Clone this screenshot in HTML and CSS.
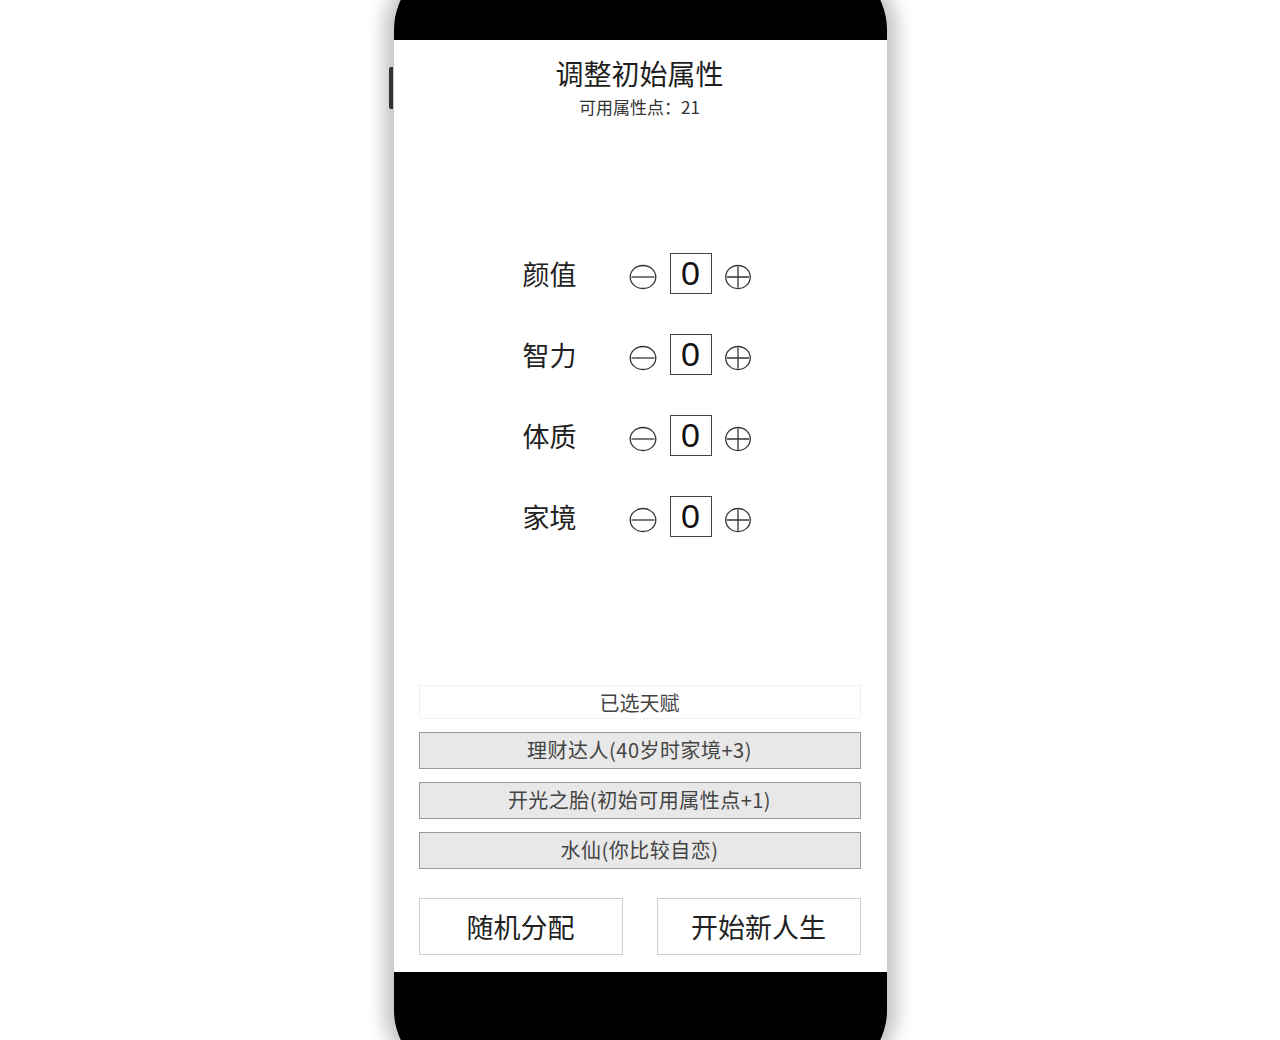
FILE: index.html
```html
<!DOCTYPE html>
<html lang="zh-CN">
<head>
  <meta charset="UTF-8">
  <meta name="viewport" content="width=device-width, initial-scale=1.0">
  <title>调整初始属性</title>
  <link rel="stylesheet" href="styles.css">
</head>
<body>
  <!-- Phone frame -->
  <div class="phone">
    <span class="side-key"></span>
    <div class="bezel-top"></div>

    <div class="screen">
      <!-- Header -->
      <div class="header">
        <div class="title">调整初始属性</div>
        <div class="points">可用属性点：21</div>
      </div>

      <!-- Attribute rows -->
      <div class="stats">
        <div class="stat">
          <span class="stat-name">颜值</span>
          <button class="step"><svg viewBox="0 0 28 26"><ellipse cx="14" cy="13" rx="12.8" ry="11.5"/><path d="M2.5 13h23"/></svg></button>
          <span class="stat-value">0</span>
          <button class="step plus"><svg viewBox="0 0 28 26"><ellipse cx="14" cy="13" rx="12.3" ry="11.5"/><path d="M3 13h22M14 2.5v21"/></svg></button>
        </div>
        <div class="stat">
          <span class="stat-name">智力</span>
          <button class="step"><svg viewBox="0 0 28 26"><ellipse cx="14" cy="13" rx="12.8" ry="11.5"/><path d="M2.5 13h23"/></svg></button>
          <span class="stat-value">0</span>
          <button class="step plus"><svg viewBox="0 0 28 26"><ellipse cx="14" cy="13" rx="12.3" ry="11.5"/><path d="M3 13h22M14 2.5v21"/></svg></button>
        </div>
        <div class="stat">
          <span class="stat-name">体质</span>
          <button class="step"><svg viewBox="0 0 28 26"><ellipse cx="14" cy="13" rx="12.8" ry="11.5"/><path d="M2.5 13h23"/></svg></button>
          <span class="stat-value">0</span>
          <button class="step plus"><svg viewBox="0 0 28 26"><ellipse cx="14" cy="13" rx="12.3" ry="11.5"/><path d="M3 13h22M14 2.5v21"/></svg></button>
        </div>
        <div class="stat">
          <span class="stat-name">家境</span>
          <button class="step"><svg viewBox="0 0 28 26"><ellipse cx="14" cy="13" rx="12.8" ry="11.5"/><path d="M2.5 13h23"/></svg></button>
          <span class="stat-value">0</span>
          <button class="step plus"><svg viewBox="0 0 28 26"><ellipse cx="14" cy="13" rx="12.3" ry="11.5"/><path d="M3 13h22M14 2.5v21"/></svg></button>
        </div>
      </div>

      <!-- Selected talents -->
      <div class="talents">
        <div class="talents-head">已选天赋</div>
        <div class="talent">理财达人(40岁时家境+3)</div>
        <div class="talent">开光之胎(初始可用属性点+1)</div>
        <div class="talent">水仙(你比较自恋)</div>
      </div>

      <!-- Actions -->
      <div class="actions">
        <button class="action">随机分配</button>
        <button class="action">开始新人生</button>
      </div>
    </div>

    <div class="bezel-bottom"></div>
  </div>
</body>
</html>
```

FILE: styles.css
```css
body {
  margin: 0;
  height: 100vh;
  overflow: hidden;
  background: #fff;
  display: flex;
  justify-content: center;
  font-family: "Noto Sans CJK SC", "Noto Sans", sans-serif;
  color: #222;
}

/* Phone body */
.phone {
  position: relative;
  width: 493px;
  height: 1120px;
  margin-top: -40px;
  background: #000;
  border-radius: 70px;
  display: flex;
  flex-direction: column;
  box-shadow: -14px 0 18px -4px rgba(0, 0, 0, 0.24), 14px 0 18px -4px rgba(0, 0, 0, 0.24);
}

.side-key {
  position: absolute;
  left: -5px;
  top: 107px;
  width: 4px;
  height: 42px;
  background: #333;
  border-radius: 2px 0 0 2px;
}

.bezel-top {
  height: 80px;
}

.bezel-bottom {
  flex: 1;
}

/* Screen */
.screen {
  height: 932px;
  background: #fff;
  display: flex;
  flex-direction: column;
  align-items: center;
  padding: 0 26px 0 25px;
}

.header {
  padding-top: 17px;
  text-align: center;
}

.title {
  font-size: 28px;
  line-height: 32px;
  color: #1e1e1e;
}

.points {
  margin-top: 8px;
  font-size: 17px;
  line-height: 20px;
  color: #333;
}

/* Attribute rows */
.stats {
  margin-top: 136px;
  display: flex;
  flex-direction: column;
  gap: 40px;
  padding-right: 5px;
}

.stat {
  display: flex;
  align-items: center;
  height: 41px;
}

.stat-name {
  font-size: 27px;
  line-height: 41px;
  width: 56px;
  color: #222;
  margin-right: 50px;
}

.step {
  border: none;
  background: none;
  padding: 0;
  width: 28px;
  height: 26px;
  margin-top: 7px;
  cursor: pointer;
}

.step svg {
  display: block;
  width: 28px;
  height: 26px;
  fill: none;
  stroke: #333;
  stroke-width: 1.3;
}

.stat-value {
  box-sizing: border-box;
  width: 42px;
  height: 41px;
  margin: 0 12px 0 13px;
  border: 1.5px solid #444;
  text-align: center;
  font-family: "Liberation Sans", sans-serif;
  font-size: 34px;
  line-height: 38px;
  color: #111;
}

/* Talents */
.talents {
  margin-top: 148px;
  width: 100%;
  display: flex;
  flex-direction: column;
  gap: 13px;
}

.talents-head {
  height: 34px;
  line-height: 33px;
  text-align: center;
  font-size: 20px;
  color: #444;
  border: 1px solid #f0f0f0;
  box-sizing: border-box;
}

.talent {
  height: 37px;
  line-height: 34px;
  box-sizing: border-box;
  text-align: center;
  font-size: 20px;
  letter-spacing: 0.5px;
  color: #444;
  background: #e8e8e8;
  border: 1px solid #9a9a9a;
}

/* Bottom actions */
.actions {
  margin-top: 29px;
  width: 100%;
  display: flex;
  justify-content: space-between;
}

.action {
  width: 204px;
  height: 57px;
  background: #fff;
  border: 1px solid #cfcfcf;
  font-family: inherit;
  font-size: 27px;
  color: #222;
  cursor: pointer;
}
```
